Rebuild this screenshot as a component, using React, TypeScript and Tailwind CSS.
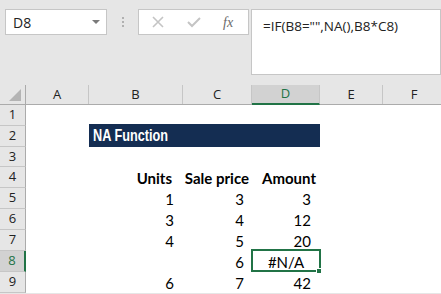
import React from "react";

const cols = [
  { name: "A", w: 63 },
  { name: "B", w: 94 },
  { name: "C", w: 69 },
  { name: "D", w: 68 },
  { name: "E", w: 63 },
  { name: "F", w: 63 },
];

type Row = { n: number; h: number; b?: string; c?: string; d?: string; bold?: boolean };

const rows: Row[] = [
  { n: 1, h: 21 },
  { n: 2, h: 21 },
  { n: 3, h: 20 },
  { n: 4, h: 21, b: "Units", c: "Sale price", d: "Amount", bold: true },
  { n: 5, h: 21, b: "1", c: "3", d: "3" },
  { n: 6, h: 21, b: "3", c: "4", d: "12" },
  { n: 7, h: 21, b: "4", c: "5", d: "20" },
  { n: 8, h: 21, c: "6", d: "#N/A" },
  { n: 9, h: 21, b: "6", c: "7", d: "42" },
];

const cellFont = { fontFamily: "Lato, 'Open Sans', sans-serif" };

const App: React.FC = () => {
  return (
    <div className="relative w-[441px] h-[294px] overflow-hidden bg-[#e6e6e6]">
      {/* formula bar */}
      <div className="flex h-[85px] pt-[9px] pl-[5px]">
        <div className="flex items-center justify-between w-[102px] h-[26px] bg-white border border-[#c6c6c6] pl-[7px] pr-[6px]">
          <span className="text-[14px] text-[#222]" style={{ fontFamily: "'Open Sans', sans-serif" }}>
            D8
          </span>
          <span className="w-0 h-0 border-l-[4px] border-r-[4px] border-t-[4px] border-l-transparent border-r-transparent border-t-[#7a7a7a]" />
        </div>
        <div className="flex flex-col items-center justify-center gap-[2px] w-[31px] h-[26px]">
          <span className="w-[2px] h-[2px] bg-[#b0b0b0]" />
          <span className="w-[2px] h-[2px] bg-[#b0b0b0]" />
          <span className="w-[2px] h-[2px] bg-[#b0b0b0]" />
        </div>
        <div className="flex items-center w-[111px] h-[26px] bg-white border border-[#c6c6c6]">
          <svg width="12" height="12" viewBox="0 0 12 12" className="ml-[13px]">
            <path d="M1 1 L11 11 M11 1 L1 11" stroke="#c4c4c4" strokeWidth="1.6" />
          </svg>
          <svg width="14" height="12" viewBox="0 0 14 12" className="ml-[23px]">
            <path d="M1 6 L5 10 L13 2" stroke="#c4c4c4" strokeWidth="2" fill="none" />
          </svg>
          <span
            className="ml-[22px] text-[14px] italic text-[#6a6a6a]"
            style={{ fontFamily: "'Liberation Serif', serif" }}
          >
            fx
          </span>
        </div>
        <div className="flex-1 ml-[2px] h-[66px] bg-white border border-[#c6c6c6] pl-[11px] pt-[3px]">
          <span className="text-[13.5px] text-[#222]" style={{ fontFamily: "'Open Sans', sans-serif" }}>
            =IF(B8="",NA(),B8*C8)
          </span>
        </div>
      </div>

      {/* column headers */}
      <div className="flex h-[20px] border-b border-[#ababab]">
        <div className="relative w-[26px] shrink-0 border-r border-[#ababab]">
          <svg width="12" height="12" viewBox="0 0 12 12" className="absolute right-[4px] bottom-[3px]">
            <path d="M12 0 L12 12 L0 12 Z" fill="#b4b4b4" />
          </svg>
        </div>
        {cols.map((c) => (
          <div
            key={c.name}
            style={{ width: c.w, fontFamily: "'Open Sans', sans-serif" }}
            className={`shrink-0 flex items-center justify-center text-[13px] border-r border-[#c6c6c6] ${
              c.name === "D" ? "bg-[#d2d2d2] text-[#217346] border-b-2 border-b-[#217346] -mb-px" : "text-[#222]"
            }`}
          >
            {c.name}
          </div>
        ))}
      </div>

      {/* rows */}
      {rows.map((r) => (
        <div key={r.n} className="flex" style={{ height: r.h }}>
          <div
            className={`w-[26px] shrink-0 flex items-center justify-center text-[13px] border-b border-[#c6c6c6] ${
              r.n === 8
                ? "bg-[#d2d2d2] text-[#217346] border-r-2 border-r-[#217346]"
                : "bg-[#e6e6e6] text-[#222] border-r border-r-[#ababab]"
            }`}
            style={{ fontFamily: "'Open Sans', sans-serif" }}
          >
            {r.n}
          </div>
          <div className="flex-1 flex bg-white">
            <div className="w-[63px] shrink-0" />
            {r.n === 2 ? (
              <div className="w-[231px] shrink-0 -mt-[2px] h-[23px] bg-[#142d52] flex items-center pl-[4px]">
                <span
                  className="text-white font-bold text-[16.5px] leading-none inline-block origin-left scale-x-[0.77]"
                  style={{ fontFamily: "'Liberation Sans', sans-serif" }}
                >
                  NA Function
                </span>
              </div>
            ) : (
              <>
                <div
                  className={`w-[94px] shrink-0 flex items-end justify-end pb-[2px] text-[15px] text-black leading-none ${
                    r.bold ? "font-bold pr-[11px]" : "pr-[9px]"
                  }`}
                  style={cellFont}
                >
                  {r.b}
                </div>
                <div
                  className={`w-[69px] shrink-0 flex items-end justify-end pb-[2px] text-[15px] text-black leading-none whitespace-nowrap ${
                    r.bold ? "font-bold pr-[3px]" : "pr-[8px]"
                  }`}
                  style={cellFont}
                >
                  {r.c}
                </div>
                <div
                  className={`w-[68px] shrink-0 flex items-end pb-[2px] text-[15px] text-black leading-none ${
                    r.n === 8 ? "justify-center" : "justify-end"
                  } ${r.bold ? "font-bold pr-[4px]" : r.n === 8 ? "" : "pr-[9px]"}`}
                  style={cellFont}
                >
                  {r.d}
                </div>
              </>
            )}
          </div>
        </div>
      ))}

      {/* selected cell D8 */}
      <div className="absolute left-[251px] top-[249px] w-[70px] h-[23px] border-2 border-[#217346] pointer-events-none" />
      <div className="absolute left-[316px] top-[268px] w-[6px] h-[6px] bg-[#217346] border border-white" />
    </div>
  );
};

export default App;
